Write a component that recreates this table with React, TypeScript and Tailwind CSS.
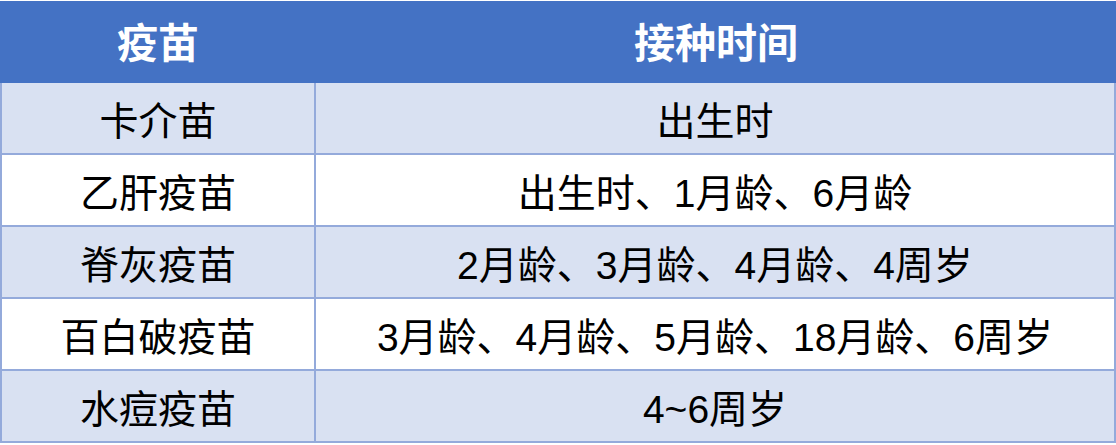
const rows = [
  { name: "卡介苗", time: "出生时" },
  { name: "乙肝疫苗", time: "出生时、1月龄、6月龄" },
  { name: "脊灰疫苗", time: "2月龄、3月龄、4月龄、4周岁" },
  { name: "百白破疫苗", time: "3月龄、4月龄、5月龄、18月龄、6周岁" },
  { name: "水痘疫苗", time: "4~6周岁" },
];

const App = () => {
  return (
    <main
      className="w-[1116px] h-[445px] bg-white pt-px overflow-hidden"
      style={{ fontFamily: '"Liberation Sans", "Noto Sans CJK SC", sans-serif' }}
    >
      <div className="grid grid-cols-[316px_1fr] h-[82px] bg-[#4472C4] text-white text-[41px] font-bold">
        <div className="flex items-center justify-center pt-[6px]">疫苗</div>
        <div className="flex items-center justify-center pt-[6px]">接种时间</div>
      </div>

      <div className="border-x-2 border-[#94AADB]">
        {rows.map((row, index) => (
          <div
            key={index}
            className={
              index % 2 === 0
                ? "grid grid-cols-[314px_1fr] h-[72px] border-b-2 border-[#94AADB] bg-[#D9E1F2] text-black text-[39px]"
                : "grid grid-cols-[314px_1fr] h-[72px] border-b-2 border-[#94AADB] bg-white text-black text-[39px]"
            }
          >
            <div className="flex items-center justify-center pt-[8px] border-r-2 border-[#94AADB]">{row.name}</div>
            <div className="flex items-center justify-center pt-[8px]">{row.time}</div>
          </div>
        ))}
      </div>
    </main>
  );
};

export default App;
